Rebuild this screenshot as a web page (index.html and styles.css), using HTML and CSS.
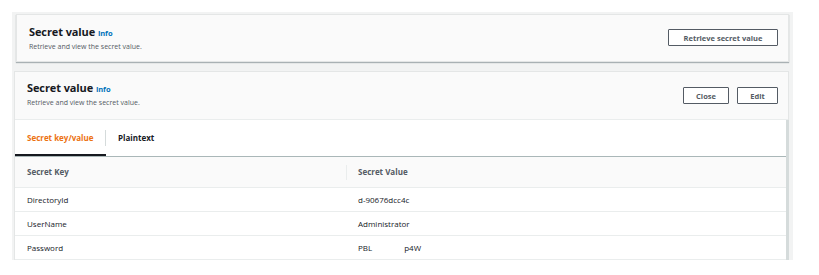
FILE: index.html
```html
<!DOCTYPE html>
<html lang="en">
<head>
  <meta charset="UTF-8">
  <meta name="viewport" content="width=device-width, initial-scale=1.0">
  <title>Secret value</title>
  <link rel="stylesheet" href="styles.css">
</head>
<body>
  <div class="page">
    <section class="panel panel-small">
      <div class="panel-head">
        <div>
          <h2>Secret value <a href="#" class="info">Info</a></h2>
          <p class="desc">Retrieve and view the secret value.</p>
        </div>
        <div class="actions">
          <button class="btn btn-wide">Retrieve secret value</button>
        </div>
      </div>
    </section>

    <section class="panel panel-main">
      <div class="panel-head">
        <div>
          <h2>Secret value <a href="#" class="info">Info</a></h2>
          <p class="desc">Retrieve and view the secret value.</p>
        </div>
        <div class="actions">
          <button class="btn btn-close">Close</button>
          <button class="btn btn-edit">Edit</button>
        </div>
      </div>

      <div class="panel-body">
        <div class="tabs">
          <span class="tab active">Secret key/value</span>
          <span class="tab">Plaintext</span>
        </div>

        <table class="kv">
          <thead>
            <tr>
              <th class="col-key">Secret Key</th>
              <th><span class="sep"></span>Secret Value</th>
            </tr>
          </thead>
          <tbody>
            <tr><td>DirectoryId</td><td>d-90676dcc4c</td></tr>
            <tr><td>UserName</td><td>Administrator</td></tr>
            <tr><td>Password</td><td>PBL<span class="gap"></span>p4W</td></tr>
          </tbody>
        </table>
      </div>
    </section>
  </div>
</body>
</html>
```

FILE: styles.css
```css
* {
  box-sizing: border-box;
}
body {
  margin: 0;
  background: #fff;
  font-family: 'Open Sans', 'Noto Sans', sans-serif;
  color: #16191f;
}
.page {
  width: 781px;
  height: 248px;
  margin: 12px 0 0 12px;
  padding: 2px 4px 0 2px;
  background: #f2f3f3;
  overflow: hidden;
}
.panel {
  background: #fafafa;
  border: 1px solid #e4e6e6;
  box-shadow: 0 1px 1px rgba(0, 28, 36, 0.3);
}
.panel-small {
  margin: 0 0 0 2px;
  height: 48px;
}
.panel-main {
  margin-top: 9px;
  background: #fff;
  box-shadow: none;
}
.panel-body {
  margin-right: -1px;
  border-right: 3px solid #d5dbdb;
}
.panel-head {
  display: flex;
  justify-content: space-between;
  align-items: flex-start;
  background: #fafafa;
}
.panel-small .panel-head {
  padding: 9px 10px 0 12px;
}
.panel-main .panel-head {
  height: 48px;
  padding: 8px 10px 0 12px;
  border-bottom: 1px solid #eaeded;
}
h2 {
  margin: 0;
  font-size: 11px;
  font-weight: 700;
  line-height: 16px;
  letter-spacing: -0.1px;
}
.info {
  font-size: 7.5px;
  color: #0073bb;
  text-decoration: none;
  font-weight: 700;
}
.desc {
  margin: 0;
  font-size: 7px;
  color: #545b64;
  line-height: 11px;
}
.actions {
  display: flex;
  gap: 8px;
}
.panel-small .actions {
  padding-top: 5px;
}
.panel-main .actions {
  padding-top: 7px;
}
.btn {
  height: 17px;
  padding: 0;
  background: #fff;
  border: 1px solid #545b64;
  border-radius: 1px;
  font-family: inherit;
  font-size: 7.5px;
  font-weight: 700;
  color: #545b64;
}
.btn-wide {
  width: 110px;
}
.btn-close {
  width: 46px;
}
.btn-edit {
  width: 41px;
}
.tabs {
  display: flex;
  height: 37px;
  align-items: center;
  border-bottom: 1px solid #aab7b8;
}
.tab {
  font-size: 8px;
  font-weight: 700;
  color: #16191f;
  padding: 0 12px;
  height: 36px;
  line-height: 36px;
}
.tab.active {
  color: #ec7211;
  width: 91px;
  border-bottom: 2px solid #16191f;
  position: relative;
}
.tab.active::after {
  content: "";
  position: absolute;
  right: 0;
  top: 10px;
  height: 16px;
  border-right: 1px solid #d5dbdb;
}
.kv {
  width: 100%;
  border-collapse: collapse;
  font-size: 8px;
}
.kv th {
  background: #fafafa;
  height: 30px;
  text-align: left;
  color: #545b64;
  font-weight: 700;
  padding: 0 0 0 12px;
  border-bottom: 1px solid #eaeded;
  position: relative;
}
.kv th.col-key {
  width: 331px;
}
.sep {
  position: absolute;
  left: 0;
  top: 8px;
  height: 15px;
  border-left: 1px solid #eaeded;
}
.kv td {
  height: 24px;
  padding: 0 0 0 12px;
  color: #16191f;
  border-bottom: 1px solid #eaeded;
}
.gap {
  display: inline-block;
  width: 32px;
}
```
